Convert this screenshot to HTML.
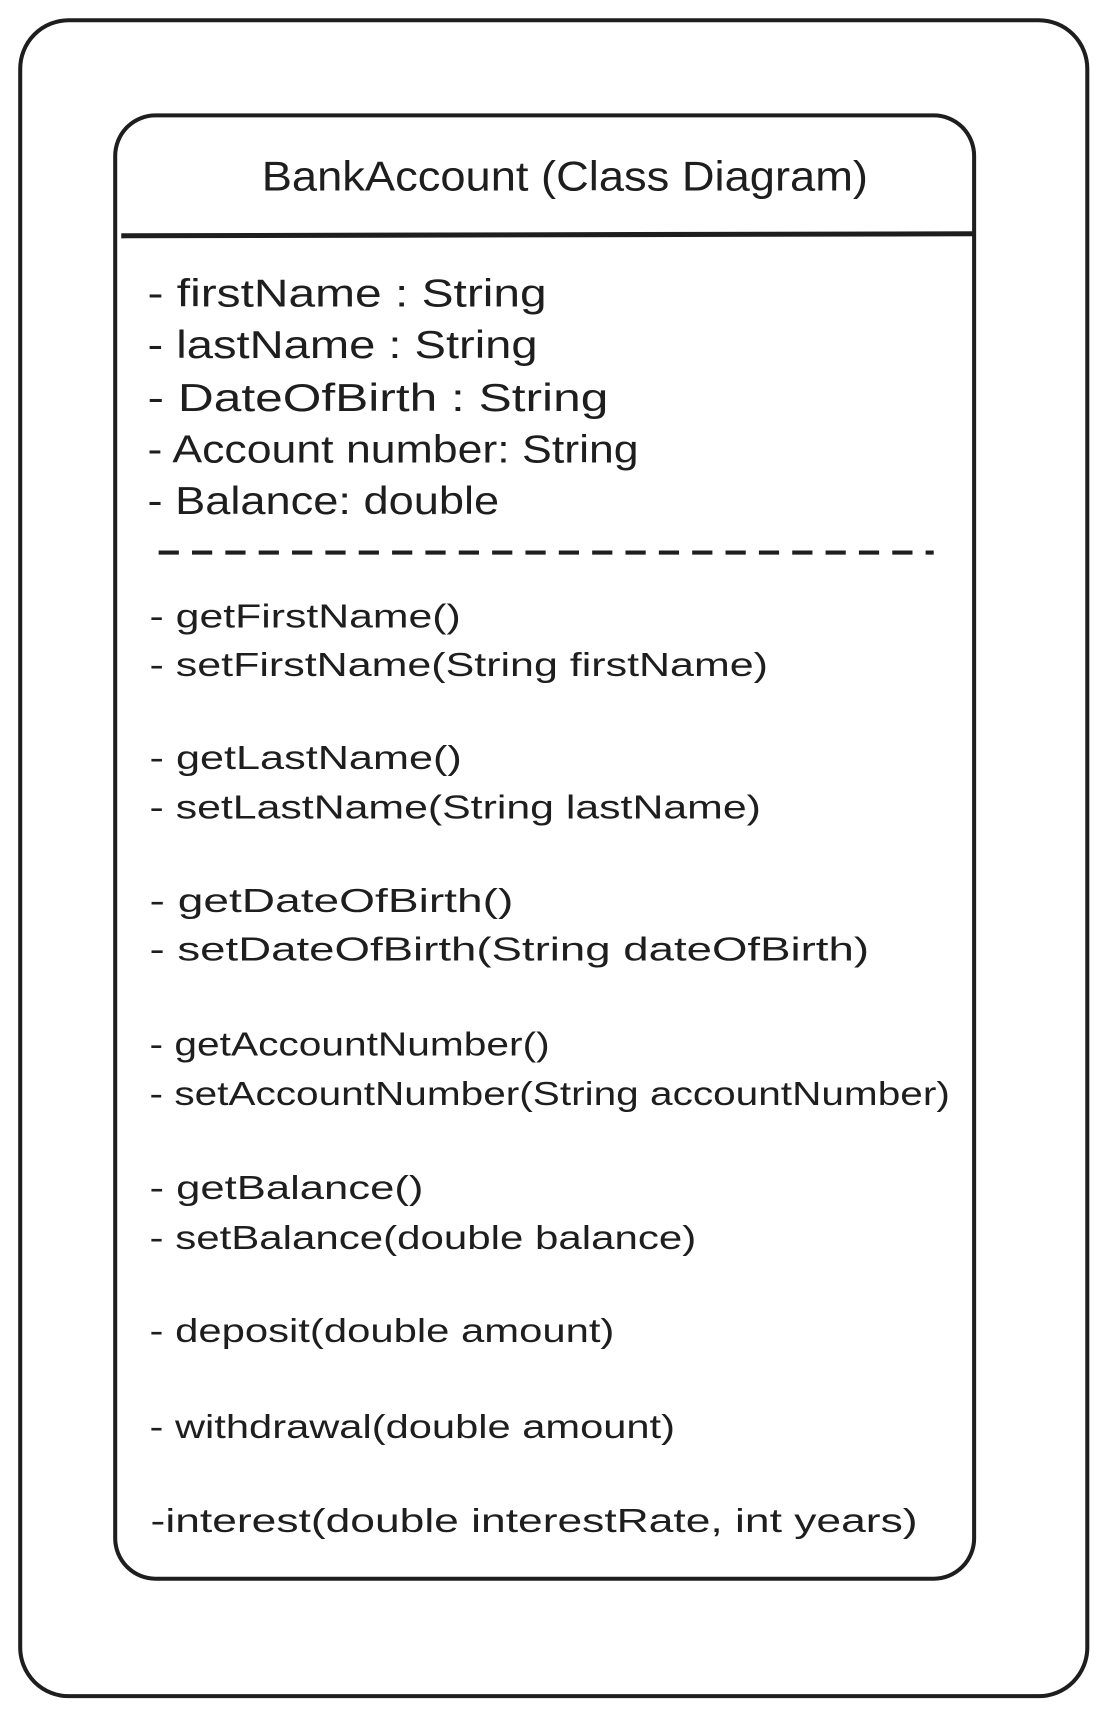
<!DOCTYPE html>
<html><head><meta charset="utf-8"><style>
html,body{margin:0;padding:0;background:#fff;}
svg{display:block;}
text{font-family:"Liberation Sans",sans-serif;fill:#1e1e1e;}
</style></head><body>
<svg width="1107" height="1714" viewBox="0 0 1107 1714" xmlns="http://www.w3.org/2000/svg">
<rect x="0" y="0" width="1107" height="1714" fill="#fff"/>
<g transform="scale(1.0105,1.012)">
<rect x="20" y="20" width="1056" height="1656" rx="48" ry="48" fill="none" stroke="#1e1e1e" stroke-width="4"/>
<rect x="114" y="114" width="850" height="1446" rx="40" ry="40" fill="none" stroke="#1e1e1e" stroke-width="4"/>
<line x1="120" y1="233" x2="964" y2="231" stroke="#1e1e1e" stroke-width="5"/>
<line x1="157" y1="546" x2="924" y2="546" stroke="#1e1e1e" stroke-width="4" stroke-dasharray="20,13"/>
<text x="259" y="188" font-size="41" textLength="600" lengthAdjust="spacingAndGlyphs">BankAccount (Class Diagram)</text>
<g font-size="38">
<text x="146" y="303" textLength="395" lengthAdjust="spacingAndGlyphs">- firstName : String</text>
<text x="146" y="354" textLength="386" lengthAdjust="spacingAndGlyphs">- lastName : String</text>
<text x="146" y="406" textLength="456" lengthAdjust="spacingAndGlyphs">- DateOfBirth : String</text>
<text x="146" y="457" textLength="486" lengthAdjust="spacingAndGlyphs">- Account number: String</text>
<text x="146" y="508" textLength="348" lengthAdjust="spacingAndGlyphs">- Balance: double</text>
</g>
<g font-size="33">
<text x="148" y="620" textLength="308" lengthAdjust="spacingAndGlyphs">- getFirstName()</text>
<text x="148" y="668" textLength="612" lengthAdjust="spacingAndGlyphs">- setFirstName(String firstName)</text>
<text x="148" y="760" textLength="309" lengthAdjust="spacingAndGlyphs">- getLastName()</text>
<text x="148" y="809" textLength="605" lengthAdjust="spacingAndGlyphs">- setLastName(String lastName)</text>
<text x="148" y="901" textLength="360" lengthAdjust="spacingAndGlyphs">- getDateOfBirth()</text>
<text x="148" y="949" textLength="712" lengthAdjust="spacingAndGlyphs">- setDateOfBirth(String dateOfBirth)</text>
<text x="148" y="1043" textLength="396" lengthAdjust="spacingAndGlyphs">- getAccountNumber()</text>
<text x="148" y="1092" textLength="792" lengthAdjust="spacingAndGlyphs">- setAccountNumber(String accountNumber)</text>
<text x="148" y="1185" textLength="271" lengthAdjust="spacingAndGlyphs">- getBalance()</text>
<text x="148" y="1234" textLength="541" lengthAdjust="spacingAndGlyphs">- setBalance(double balance)</text>
<text x="148" y="1326" textLength="460" lengthAdjust="spacingAndGlyphs">- deposit(double amount)</text>
<text x="148" y="1421" textLength="520" lengthAdjust="spacingAndGlyphs">- withdrawal(double amount)</text>
<text x="149" y="1514" textLength="759" lengthAdjust="spacingAndGlyphs">-interest(double interestRate, int years)</text>
</g>
</g>
</svg>
</body></html>
